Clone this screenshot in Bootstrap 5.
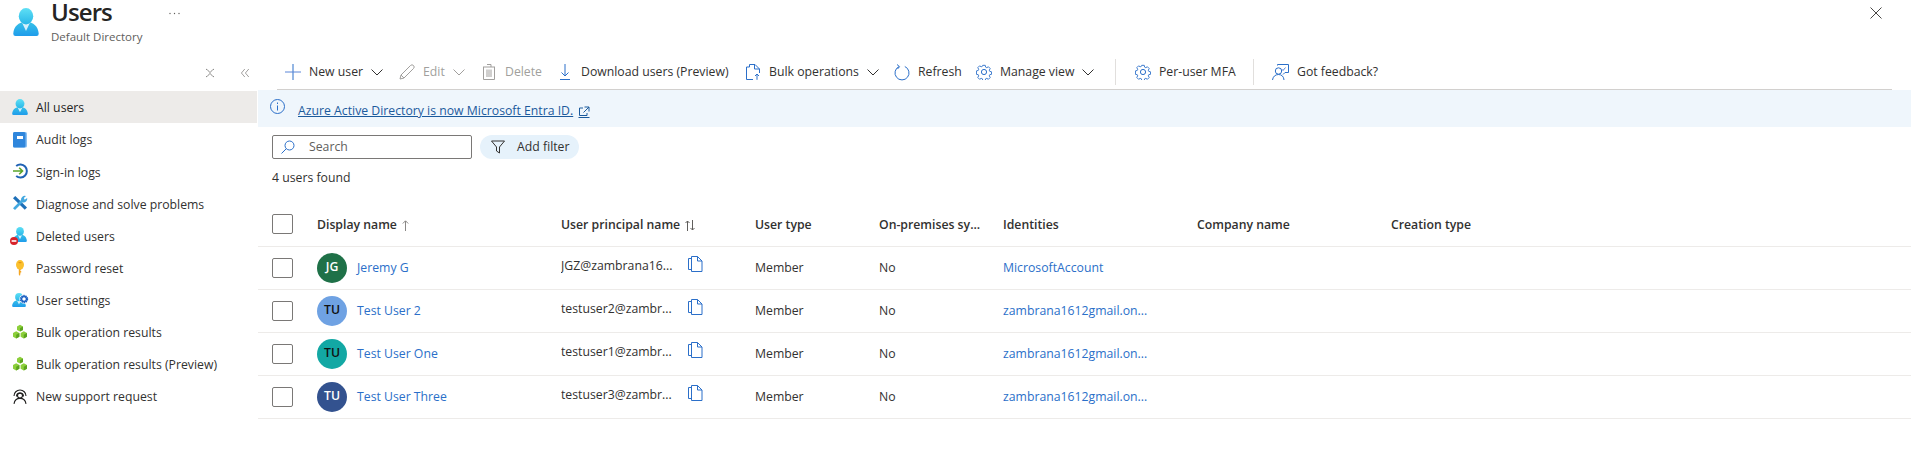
<!DOCTYPE html>
<html lang="en">
<head>
    <meta charset="UTF-8">
    <title>Users - Default Directory</title>
    <link href="https://cdn.jsdelivr.net/npm/bootstrap@5.3.0/dist/css/bootstrap.min.css" rel="stylesheet">
    <style>
        html, body { height: 467px; overflow: hidden; }
        body {
            font-family: "Open Sans", "Liberation Sans", sans-serif;
            font-size: 12.25px;
            color: #323130;
            background: #fff;
        }
        svg { flex: none; display: block; overflow: visible; }

        .blade-head { height: 54px; padding-left: 13px; }
        .blade-title { font-size: 24px; line-height: 24px; font-weight: 600; letter-spacing: -.9px; color: #252423; margin: 0; }
        .blade-sub { font-size: 11.5px; line-height: 16px; color: #605e5c; margin-top: 5px; }
        .blade-more { margin: 12px 0 0 26px; width: 11px; }
        .blade-close { margin: 7px 29px 0 auto; }

        .side-menu { width: 257px; flex: none; }
        .side-tools { height: 37px; padding-right: 8px; gap: 27px; }
        .side-item { height: 32.1px; padding-left: 12px; gap: 8px; color: #323130; }
        .side-item span { margin-top: 3px; }
        .side-item.active-row { background: #edebe9; color: #252423; }

        .main-pane { flex: 1 1 auto; min-width: 0; padding-left: 1px; }
        .cmd-bar { height: 36px; margin: 0 19px; padding: 1px 0 0 8px; border-bottom: 1px solid #d2d0ce; }
        .cmd-item { gap: 8px; white-space: nowrap; color: #323130; flex: none; }
        .cmd-item.off { color: #a19f9d; }
        .cmd-bar > :nth-child(1) { width: 114px; }
        .cmd-bar > :nth-child(2) { width: 82px; }
        .cmd-bar > :nth-child(3) { width: 76px; }
        .cmd-bar > :nth-child(4) { width: 188px; }
        .cmd-bar > :nth-child(5) { width: 149px; }
        .cmd-bar > :nth-child(6) { width: 82px; }
        .cmd-bar > :nth-child(7) { width: 139px; }
        .cmd-bar > :nth-child(9) { width: 118px; }
        .cmd-gap { width: 20px; height: 26px; flex: none; }
        .cmd-gap::before { content: ""; display: block; width: 1px; height: 26px; background: #e1dfdd; }
        .cmd-gap.narrow { width: 19px; }

        .info-strip { height: 37px; background: #eff6fc; padding-left: 12px; gap: 13px; }
        .info-strip a { color: #1b5a9c; }
        .info-link { gap: 5px; margin-top: 6px; }

        .filter-row { padding: 8px 0 0 14px; gap: 8px; height: 32px; }
        .search-field { width: 200px; height: 24px; border: 1px solid #7a7876; border-radius: 2px; padding-left: 8px; gap: 14px; color: #605e5c; }
        .filter-pill { width: 99px; height: 24px; border-radius: 12px; background: #e6f2fb; padding-left: 11px; gap: 12px; color: #323130; }
        .count-line { padding-left: 14px; height: 44px; line-height: 38px; }

        .user-grid { table-layout: fixed; margin: 0; }
        .user-grid th, .user-grid td {
            padding: 2px 0 0; height: 43px; vertical-align: middle; font-size: 12.25px;
            border-bottom: 1px solid #edebe9; color: #323130; white-space: nowrap; overflow: hidden;
        }
        .user-grid th { font-weight: 600; }
        .user-grid .no-shift { padding-top: 0; }
        .user-grid a { color: #2b6fc9; text-decoration: none; }
        .tick-box { width: 21px; height: 20px; border: 1px solid #7a7876; border-radius: 2px; margin-left: 14px; }
        .sort-gap { gap: 5px; }
        .face-row { gap: 10px; }
        .face-dot { width: 30px; height: 30px; border-radius: 50%; font-size: 12.25px; font-weight: 600; flex: none; }
        .face-row a { margin-top: 2px; }
        .face-green { background: #1f7148; color: #fff; }
        .face-sky { background: #6fa2e3; color: #111; }
        .face-teal { background: #13a8a4; color: #111; }
        .face-navy { background: #33528f; color: #fff; }
        .upn-text { width: 127px; margin-top: -4px; }
        .copy-ico { margin-top: -9px; }
    </style>
</head>
<body>
    <svg width="0" height="0" style="position:absolute">
        <defs>
            <linearGradient id="gUser" x1="0" y1="0" x2="0" y2="1"><stop offset="0" stop-color="#37c2e8"/><stop offset="1" stop-color="#1f9ceb"/></linearGradient>
            <linearGradient id="gHead" x1="0" y1="0" x2="0" y2="1"><stop offset="0" stop-color="#5fe0f5"/><stop offset="1" stop-color="#29b6e8"/></linearGradient>
            <symbol id="i-user" viewBox="0 0 18 18" preserveAspectRatio="none">
                <path d="M16.300 18a1.500 1.500 0 0 0 1.500-1.600C17.400 12 14.400 9 9 9S.6 12 .2 16.400A1.500 1.500 0 0 0 1.700 18Z" fill="url(#gUser)"/>
                <path d="M6.200 9.400 9 14.800l2.800-5.400A9 9 0 0 0 9 9a9 9 0 0 0-2.800.4Z" fill="#fff" opacity=".8"/>
                <ellipse cx="9" cy="5.300" rx="5" ry="5.300" fill="url(#gHead)"/>
            </symbol>
            <symbol id="i-cube" viewBox="0 0 16 16">
                <path d="M8 .8 11 2.400V6L8 7.600 5 6V2.400Z" fill="#8ccf3a"/><path d="M8 4.200V7.600L11 6V2.400Z" fill="#5ba31f"/>
                <path d="M4.200 7.200 7.400 9v3.800l-3.200 1.800L1 12.800V9Z" fill="#8ccf3a"/><path d="M4.200 10.800v3.800l3.200-1.800V9Z" fill="#5ba31f"/>
                <path d="M11.800 7.200 15 9v3.800l-3.200 1.800-3.200-1.800V9Z" fill="#8ccf3a"/><path d="M11.800 10.800v3.800l3.200-1.800V9Z" fill="#5ba31f"/>
            </symbol>
            <symbol id="i-caret" viewBox="0 0 12 12"><path d="M.5 3.500 6 9l5.500-5.500" fill="none" stroke="currentColor" stroke-width="1"/></symbol>
            <symbol id="i-gear" viewBox="0 0 16 16">
                <path d="M6.600.8h2.800l.4 2 1.300.6 1.800-1 2 2-1 1.800.5 1.300 2 .5v2.800l-2 .4-.5 1.300 1 1.800-2 2-1.800-1-1.300.5-.4 2H6.600l-.4-2-1.300-.5-1.800 1-2-2 1-1.800-.5-1.300-2-.4V7l2-.5.5-1.300-1-1.800 2-2 1.800 1 1.300-.5Z" transform="translate(.8 .6) scale(.9)" fill="none" stroke="#2b6fc9" stroke-width="1"/>
                <circle cx="8" cy="8" r="2.600" fill="none" stroke="#2b6fc9"/>
            </symbol>
            <symbol id="i-copy" viewBox="0 0 15 16">
                <path d="M3.500.5H9.500L14 5V15.500H3.500ZM9.500.5V5H14M3.500 2.500H.5V13.500H3.500" fill="none" stroke="#2b6fc9"/>
            </symbol>
        </defs>
    </svg>

    <header class="blade-head d-flex">
        <svg width="26" height="28" class="mt-2"><use href="#i-user"/></svg>
        <div class="ms-2 ps-1">
            <h1 class="blade-title">Users</h1>
            <div class="blade-sub">Default Directory</div>
        </div>
        <svg class="blade-more" height="3" viewBox="0 0 11 3"><circle cx="1" cy="1.500" r=".7" fill="#605e5c"/><circle cx="5.500" cy="1.500" r=".7" fill="#605e5c"/><circle cx="10" cy="1.500" r=".7" fill="#605e5c"/></svg>
        <svg class="blade-close" width="12" height="12" viewBox="0 0 12 12"><path d="M.5.5l11 11m0-11-11 11" stroke="#484644" stroke-width="1"/></svg>
    </header>

    <div class="d-flex">
        <nav class="side-menu">
            <div class="side-tools d-flex justify-content-end align-items-center">
                <svg width="8" height="8" viewBox="0 0 8 8"><path d="M0 .4H1L4 3.600 7 .4H8M0 7.600H1L4 4.400 7 7.600H8" fill="none" stroke="#605e5c" stroke-width=".7"/></svg>
                <svg width="8" height="8" viewBox="0 0 8 8"><path d="M3.800 0 .4 4l3.400 4M7.800 0 4.400 4l3.400 4" fill="none" stroke="#8a8886" stroke-width=".8"/></svg>
            </div>
            <div class="side-item active-row d-flex align-items-center">
                <svg width="16" height="16"><use href="#i-user"/></svg><span>All users</span>
            </div>
            <div class="side-item d-flex align-items-center">
                <svg width="16" height="16" viewBox="0 0 16 16"><rect x="1" y="1" width="14" height="15.500" rx="1.500" fill="#8cc1f2"/><rect x="1" y="1" width="12.500" height="15.500" rx="1.500" fill="#2f86dc"/><rect x="5" y="5" width="6" height="3" fill="#fff"/></svg><span>Audit logs</span>
            </div>
            <div class="side-item d-flex align-items-center">
                <svg width="16" height="16" viewBox="0 0 16 16"><path d="M4.200 3A6.500 6.500 0 1 1 4.200 13" fill="none" stroke="#1f62b4" stroke-width="2"/><path d="M1 8h9.500M7.200 4.800 10.500 8 7.200 11.200" fill="none" stroke="#5aa52a" stroke-width="1.600"/></svg><span>Sign-in logs</span>
            </div>
            <div class="side-item d-flex align-items-center">
                <svg width="16" height="16" viewBox="0 0 16 16"><path d="M3.300 1 15 12.500 12.800 14.800 1 3.300Z" fill="#1d6fb8"/><path d="M1 13.300 9.500 4.500 11.500 6.500 3 15Z" fill="#43a8e0"/><path d="M9 5a3.800 3.800 0 0 1 5-4l-2.200 2.100.9 1.700L15.200 3A3.800 3.800 0 0 1 11 7.500Z" fill="#43a8e0"/></svg><span>Diagnose and solve problems</span>
            </div>
            <div class="side-item d-flex align-items-center">
                <svg width="16" height="16" viewBox="0 0 16 16"><use href="#i-user" x="1" width="14" height="15"/><circle cx="2" cy="14" r="4" fill="#d8232a"/><rect x="-.4" y="13.200" width="4.800" height="1.600" fill="#fff"/></svg><span>Deleted users</span>
            </div>
            <div class="side-item d-flex align-items-center">
                <svg width="16" height="16" viewBox="0 0 16 16"><path d="M6.800 8h2.400v1.800H8.400v1.100h.8v1.500h-.8v1.200L8 16l-1.200-1.600Z" fill="#f5a623"/><ellipse cx="8" cy="4.800" rx="4" ry="4.800" fill="#fbc02d"/><rect x="6.400" y="2" width="3.200" height="1.200" rx=".6" fill="#e69512"/></svg><span>Password reset</span>
            </div>
            <div class="side-item d-flex align-items-center">
                <svg width="16" height="16" viewBox="0 0 16 16"><use href="#i-user" width="14" height="14" y="1"/><circle cx="12" cy="7" r="4.700" fill="#fff"/><circle cx="12" cy="7" r="3.200" fill="none" stroke="#1a5fc2" stroke-width="2" stroke-dasharray="1.400 .6"/><circle cx="12" cy="7" r="2.400" fill="none" stroke="#1a5fc2" stroke-width="1.300"/></svg><span>User settings</span>
            </div>
            <div class="side-item d-flex align-items-center">
                <svg width="16" height="16"><use href="#i-cube"/></svg><span>Bulk operation results</span>
            </div>
            <div class="side-item d-flex align-items-center">
                <svg width="16" height="16"><use href="#i-cube"/></svg><span>Bulk operation results (Preview)</span>
            </div>
            <div class="side-item d-flex align-items-center">
                <svg width="16" height="16" viewBox="0 0 16 16" fill="none" stroke="#201f1e" stroke-width="1.100"><path d="M2 8A6 6 0 0 1 14 8M4.500 8.500A3.500 3.500 0 0 1 11.500 8.500"/><circle cx="8" cy="7.600" r="2.500"/><path d="M2 15.800C2.600 12 5 10.400 8 10.400s5.400 1.600 6 5.400"/></svg><span>New support request</span>
            </div>
        </nav>

        <main class="main-pane">
            <div class="cmd-bar d-flex align-items-center">
                <div class="cmd-item d-flex align-items-center">
                    <svg width="16" height="16" viewBox="0 0 16 16"><path d="M8 0v16" stroke="#2b6fc9"/><path d="M0 8h16" stroke="#5a86d8"/></svg><span>New user</span>
                    <svg width="12" height="12"><use href="#i-caret"/></svg>
                </div>
                <div class="cmd-item off d-flex align-items-center">
                    <svg width="16" height="16" viewBox="0 0 16 16" fill="none" stroke="#a19f9d"><path d="M1 15l1-4L11.500 1.500a1.500 1.500 0 0 1 3 3L5 14Z"/><path d="M2 11l3 3"/></svg><span>Edit</span>
                    <svg width="12" height="12"><use href="#i-caret"/></svg>
                </div>
                <div class="cmd-item off d-flex align-items-center">
                    <svg width="16" height="16" viewBox="0 0 16 16" fill="none" stroke="#a19f9d"><path d="M2 3h12M2.500 3v12.500h11V3M6 .5h4V3"/><path d="M6 5.500v7.500M8 5.500v7.500M10 5.500v7.500"/></svg><span>Delete</span>
                </div>
                <div class="cmd-item d-flex align-items-center">
                    <svg width="16" height="16" viewBox="0 0 16 16" fill="none" stroke="#2b6fc9"><path d="M8 0v12M4.500 8.500 8 12l3.500-3.500M3 15.500h10"/></svg><span>Download users (Preview)</span>
                </div>
                <div class="cmd-item d-flex align-items-center">
                    <svg width="16" height="16" viewBox="0 0 16 16" fill="none" stroke="#2b6fc9"><path d="M4.500 3V.5H10L14.500 5V9M9.500.5V5H14.500M4.500 3H1.500V15.500H8"/><path d="M12 15.800V10M10 12l2-2 2 2"/></svg><span>Bulk operations</span>
                    <svg width="12" height="12"><use href="#i-caret"/></svg>
                </div>
                <div class="cmd-item d-flex align-items-center">
                    <svg width="16" height="17" viewBox="0 0 16 17" fill="none" stroke="#2b6fc9"><path d="M5.200 2.500A7 7 0 1 0 10.800 2.500"/><path d="M3 .5 5.500 2.700 3.500 5"/></svg><span>Refresh</span>
                </div>
                <div class="cmd-item d-flex align-items-center">
                    <svg width="16" height="16"><use href="#i-gear"/></svg><span>Manage view</span>
                    <svg width="12" height="12"><use href="#i-caret"/></svg>
                </div>
                <div class="cmd-gap"></div>
                <div class="cmd-item d-flex align-items-center">
                    <svg width="16" height="16"><use href="#i-gear"/></svg><span>Per-user MFA</span>
                </div>
                <div class="cmd-gap narrow"></div>
                <div class="cmd-item d-flex align-items-center">
                    <svg width="17" height="17" viewBox="0 0 17 17" fill="none" stroke="#2b6fc9"><circle cx="6.500" cy="7" r="3.200"/><path d="M.5 16c.4-3.300 2.700-5.500 6-5.500s5.300 2.200 5.500 5.500M5.500 1.500V.5H16.500V8.500H13L11 10.500"/><path d="M9.500 5l1.500 1.500L13.500 3.500" stroke="#5a86d8"/></svg><span>Got feedback?</span>
                </div>
            </div>

            <div class="info-strip d-flex align-items-center">
                <svg width="15" height="15" viewBox="0 0 15 15" class="mb-1" fill="none" stroke="#2b6fc9"><circle cx="7.500" cy="7.500" r="7"/><path d="M7.500 6.500v5M7.500 3.500v1.500"/></svg>
                <div class="info-link d-flex align-items-center">
                    <a href="#">Azure Active Directory is now Microsoft Entra ID.</a>
                    <svg width="12" height="12" viewBox="0 0 12 12" fill="none" stroke="#1b5a9c"><path d="M5 2H1.500V9.500H9V7M6.500 1H11V5.500M11 1 5.500 6.500M.5 11.500h11"/></svg>
                </div>
            </div>

            <div class="filter-row d-flex">
                <div class="search-field d-flex align-items-center">
                    <svg width="14" height="14" viewBox="0 0 14 14" fill="none"><circle cx="8.500" cy="5.500" r="4.500" stroke="#2b6fc9"/><path d="M5.300 8.700.5 13.500" stroke="#2b6fc9"/></svg><span>Search</span>
                </div>
                <div class="filter-pill d-flex align-items-center">
                    <svg width="14" height="14" viewBox="0 0 14 14" fill="none" stroke="#323130"><path d="M.5 1h13L8.500 7v6L5.500 11V7Z"/></svg><span>Add filter</span>
                </div>
            </div>
            <div class="count-line">4 users found</div>

            <table class="table user-grid">
                <colgroup>
                    <col style="width:59px"><col style="width:244px"><col style="width:194px"><col style="width:124px"><col style="width:124px"><col style="width:194px"><col style="width:194px"><col>
                </colgroup>
                <thead>
                    <tr>
                        <th class="no-shift"><div class="tick-box"></div></th>
                        <th><div class="d-flex align-items-center sort-gap">Display name <svg width="7" height="11" viewBox="0 0 7 11" fill="none" stroke="#8a8886"><path d="M3.500 11V1M.8 3.500 3.500 .8l2.700 2.700"/></svg></div></th>
                        <th><div class="d-flex align-items-center sort-gap">User principal name <svg width="10" height="11" viewBox="0 0 10 11" fill="none" stroke="#605e5c"><path d="M2.500 11V1M.5 3l2-2 2 2M7.500 0v10M5.500 8l2 2 2-2"/></svg></div></th>
                        <th>User type</th>
                        <th>On-premises sy...</th>
                        <th>Identities</th>
                        <th>Company name</th>
                        <th>Creation type</th>
                    </tr>
                </thead>
                <tbody>
                    <tr>
                        <td class="no-shift"><div class="tick-box"></div></td>
                        <td class="no-shift"><div class="face-row d-flex align-items-center"><div class="face-dot face-green d-flex align-items-center justify-content-center">JG</div><a href="#">Jeremy G</a></div></td>
                        <td><div class="d-flex align-items-center"><div class="upn-text">JGZ@zambrana16...</div><svg class="copy-ico" width="15" height="16"><use href="#i-copy"/></svg></div></td>
                        <td>Member</td><td>No</td><td><a href="#">MicrosoftAccount</a></td><td></td><td></td>
                    </tr>
                    <tr>
                        <td class="no-shift"><div class="tick-box"></div></td>
                        <td class="no-shift"><div class="face-row d-flex align-items-center"><div class="face-dot face-sky d-flex align-items-center justify-content-center">TU</div><a href="#">Test User 2</a></div></td>
                        <td><div class="d-flex align-items-center"><div class="upn-text">testuser2@zambr...</div><svg class="copy-ico" width="15" height="16"><use href="#i-copy"/></svg></div></td>
                        <td>Member</td><td>No</td><td><a href="#">zambrana1612gmail.on...</a></td><td></td><td></td>
                    </tr>
                    <tr>
                        <td class="no-shift"><div class="tick-box"></div></td>
                        <td class="no-shift"><div class="face-row d-flex align-items-center"><div class="face-dot face-teal d-flex align-items-center justify-content-center">TU</div><a href="#">Test User One</a></div></td>
                        <td><div class="d-flex align-items-center"><div class="upn-text">testuser1@zambr...</div><svg class="copy-ico" width="15" height="16"><use href="#i-copy"/></svg></div></td>
                        <td>Member</td><td>No</td><td><a href="#">zambrana1612gmail.on...</a></td><td></td><td></td>
                    </tr>
                    <tr>
                        <td class="no-shift"><div class="tick-box"></div></td>
                        <td class="no-shift"><div class="face-row d-flex align-items-center"><div class="face-dot face-navy d-flex align-items-center justify-content-center">TU</div><a href="#">Test User Three</a></div></td>
                        <td><div class="d-flex align-items-center"><div class="upn-text">testuser3@zambr...</div><svg class="copy-ico" width="15" height="16"><use href="#i-copy"/></svg></div></td>
                        <td>Member</td><td>No</td><td><a href="#">zambrana1612gmail.on...</a></td><td></td><td></td>
                    </tr>
                </tbody>
            </table>
        </main>
    </div>
    <script src="https://cdn.jsdelivr.net/npm/bootstrap@5.3.0/dist/js/bootstrap.bundle.min.js"></script>
</body>
</html>
